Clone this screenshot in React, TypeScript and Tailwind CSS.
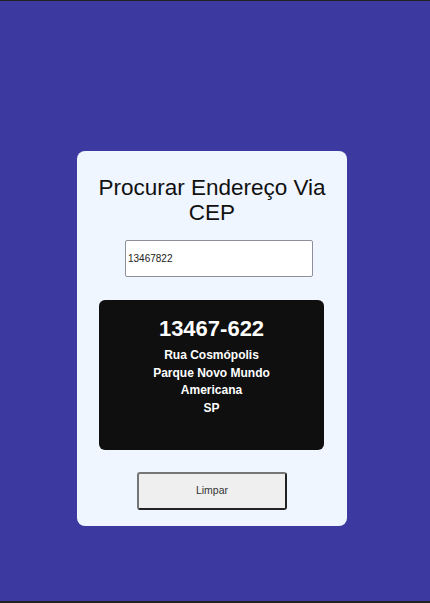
import React from "react";

export default function App() {
  return (
    <div
      className="w-full h-[603px] bg-[#3c3aa0] border-t border-b-2 border-[#222222] flex justify-center pr-[6px]"
      style={{ fontFamily: '"Liberation Sans", Arial, sans-serif' }}
    >
      <div className="mt-[150px] w-[270px] h-[375px] bg-[#eff6ff] rounded-[8px] flex flex-col pt-[24px]">
        <h1 className="text-[22.5px] leading-[25px] text-[#111111] text-center px-[8px]">
          Procurar Endereço Via CEP
        </h1>
        <input
          readOnly
          value="13467822"
          className="mt-[15px] ml-[48px] w-[188px] h-[37px] bg-white border border-[#8f8f9d] rounded-[2px] px-[2px] text-[10px] text-[#222] outline-none"
        />
        <div className="mt-[23px] ml-[22px] w-[225px] h-[150px] bg-[#0f0f0f] rounded-[6px] flex flex-col items-center pt-[16px] text-white">
          <div className="text-[22px] leading-[25px] font-bold">13467-622</div>
          <div className="mt-[6px] flex flex-col items-center text-[12px] leading-[17.7px] font-bold">
            <span>Rua Cosmópolis</span>
            <span>Parque Novo Mundo</span>
            <span>Americana</span>
            <span>SP</span>
          </div>
        </div>
        <button className="mt-[22px] ml-[60px] w-[150px] h-[38px] bg-[#efefef] border-2 border-t-[#767676] border-l-[#767676] border-r-[#222] border-b-[#222] rounded-[3px] text-[10.5px] text-[#333]">
          Limpar
        </button>
      </div>
    </div>
  );
}
